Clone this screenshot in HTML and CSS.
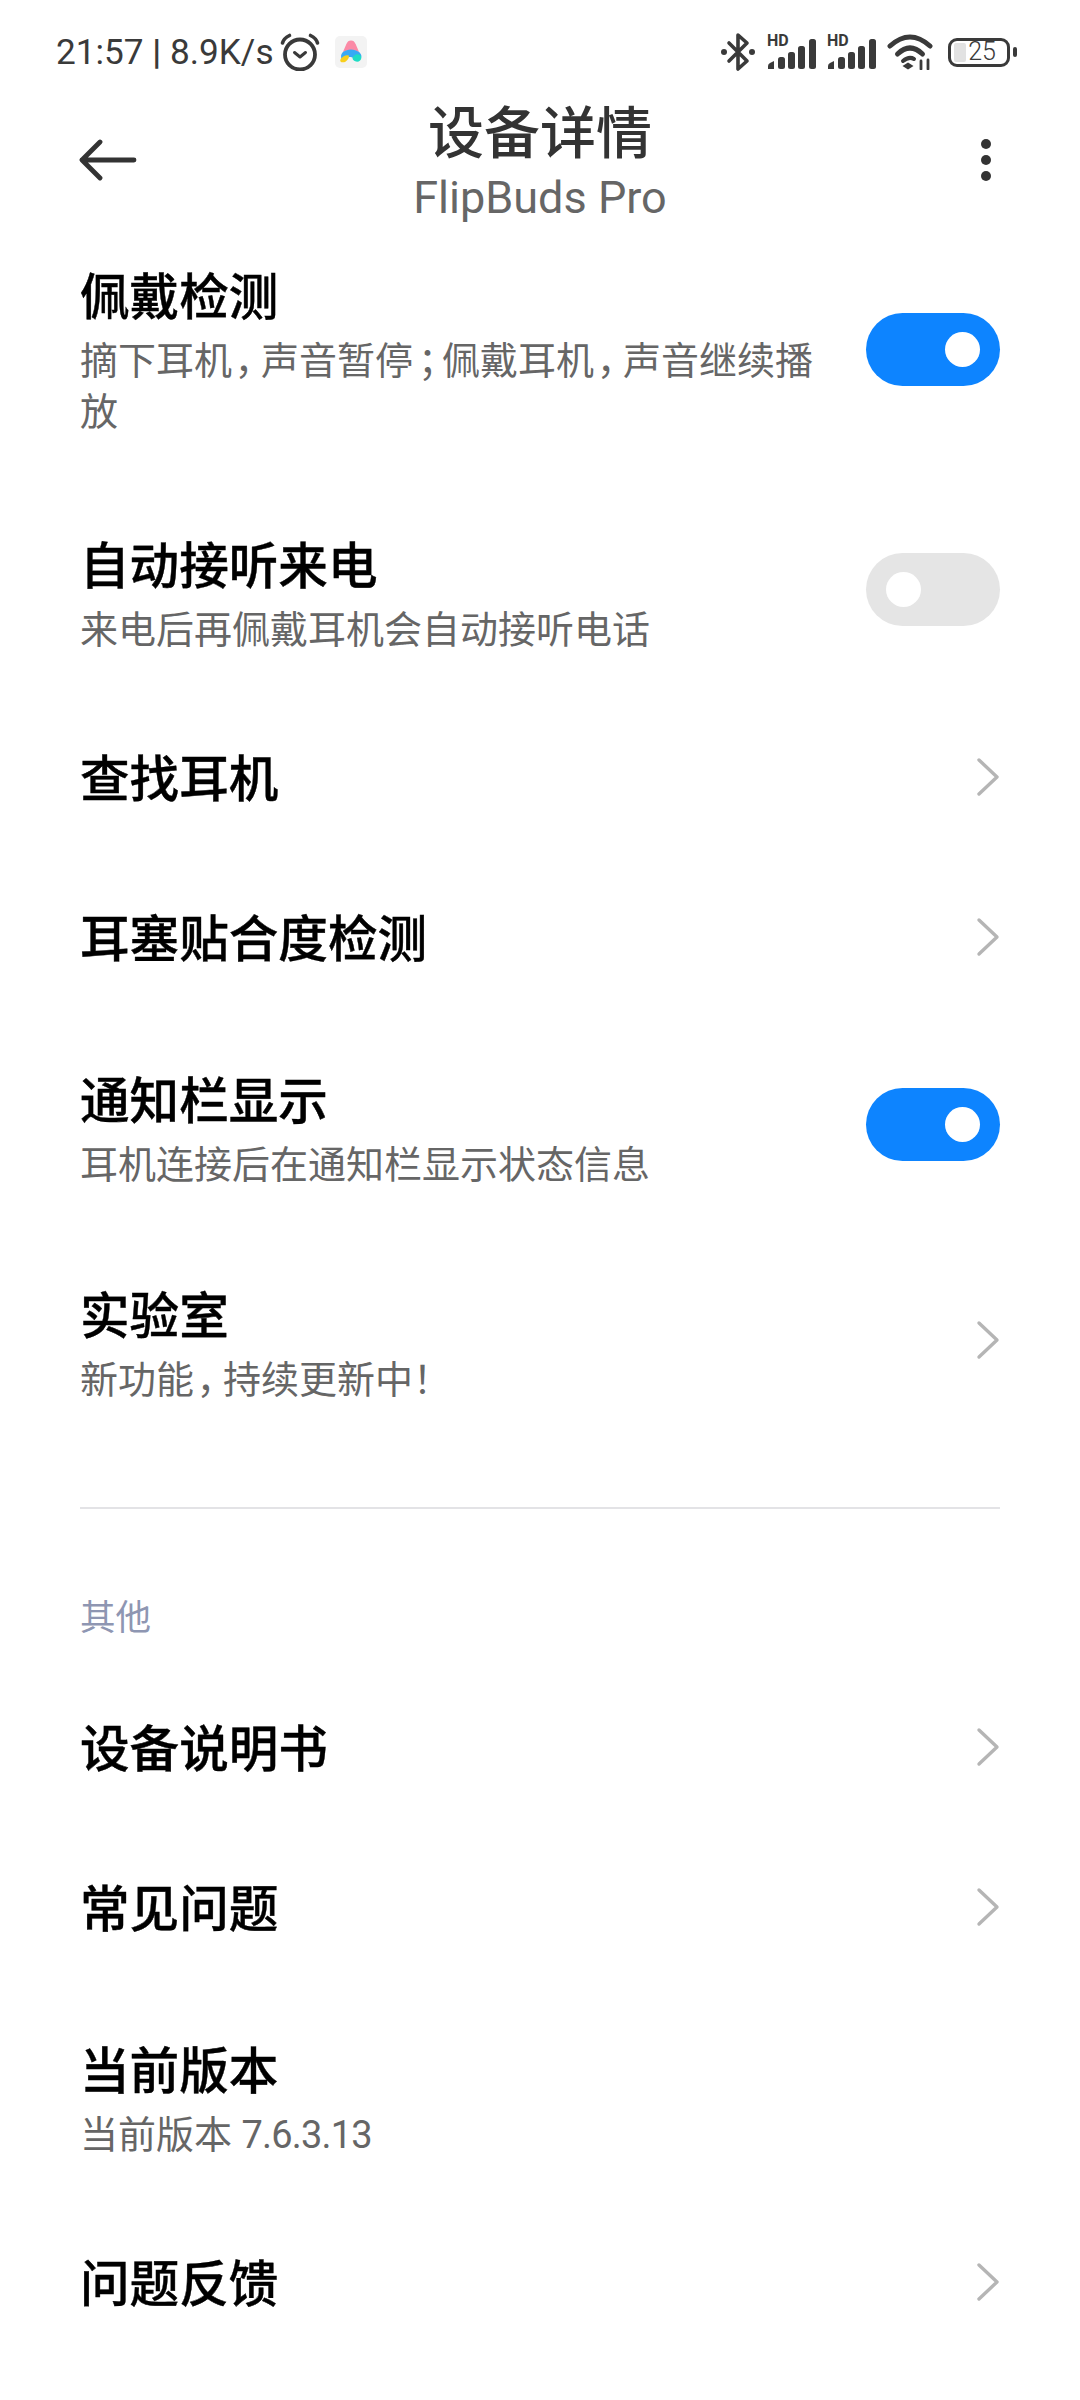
FILE: index.html
```html
<!DOCTYPE html>
<html lang="zh">
<head>
    <meta charset="utf-8">
    <title>设备详情</title>
    <link rel="stylesheet" href="styles.css">
</head>
<body>
    <div class="status-bar">
        <div class="status-left">
            <span class="status-text">21:57 <b class="status-sep">|</b> 8.9K/s</span>
            <svg class="icon-alarm" width="40" height="38" viewBox="0 0 40 38" fill="none" stroke="#3a3a3a">
                <circle cx="20" cy="21.5" r="15" stroke-width="3.8"/>
                <path d="M14.5 19.5l5.5 4.5 5.5-4.5" stroke-width="3" stroke-linecap="round" stroke-linejoin="round"/>
                <path d="M2.5 10c1-4 4-6 7-7.500M37.500 10c-1-4-4-6-7-7.500" stroke-width="3.6" stroke-linecap="round"/>
            </svg>
            <svg class="icon-app" width="32" height="32" viewBox="0 0 32 32">
                <rect width="32" height="32" rx="5" fill="#f3f3f3"/>
                <g transform="translate(-2.4 -2.4) scale(1.15)">
                    <path d="M16 6c2 0 3 1 4 3l3 7c-4-2-10-2-14 0l3-7c1-2 2-3 4-3z" fill="#fb8aa6"/>
                    <path d="M9 16c4-3 10-3 14 0 2 2 3 4 1 6-1 1-3 1-5 0-2-2-5-2-7-1l-4 2c-1-3-1-5 1-7z" fill="#38a9f5"/>
                    <path d="M19 19c2-2 6-1 6 2s-4 5-7 2c-1-1-1-3 1-4z" fill="#1fdcc4"/>
                    <path d="M7 22c1-2 5-4 7-3 1 2-2 6-5 6-2 0-3-1-2-3z" fill="#f8cf1c"/>
                </g>
            </svg>
        </div>
        <div class="status-right">
            <svg width="36" height="40" viewBox="0 0 36 40" fill="none" stroke="#3a3a3a" stroke-width="3.6" stroke-linejoin="round" stroke-linecap="round">
                <path d="M9 11l18 18-9 8V3l9 8L9 29"/>
                <circle cx="4" cy="20" r="3" fill="#3a3a3a" stroke="none"/>
                <circle cx="32" cy="20" r="3" fill="#3a3a3a" stroke="none"/>
            </svg>
            <div class="signal">
                <span class="signal-hd">HD</span>
                <svg class="signal-bars" width="49" height="30" viewBox="0 0 49 30" fill="#3a3a3a">
                    <path d="M1 30v-3q0-2 2-3l4-2v8z"/>
                    <rect x="11" y="18" width="7" height="12" rx="2.5"/>
                    <rect x="21" y="13" width="7" height="17" rx="2.5"/>
                    <rect x="31" y="7" width="7" height="23" rx="2.5"/>
                    <rect x="42" y="0" width="7" height="30" rx="2.5"/>
                </svg>
            </div>
            <div class="signal">
                <span class="signal-hd">HD</span>
                <svg class="signal-bars" width="49" height="30" viewBox="0 0 49 30" fill="#3a3a3a">
                    <path d="M1 30v-3q0-2 2-3l4-2v8z"/>
                    <rect x="11" y="18" width="7" height="12" rx="2.5"/>
                    <rect x="21" y="13" width="7" height="17" rx="2.5"/>
                    <rect x="31" y="7" width="7" height="23" rx="2.5"/>
                    <rect x="42" y="0" width="7" height="30" rx="2.5"/>
                </svg>
            </div>
            <svg width="46" height="36" viewBox="0 0 46 36" fill="none" stroke="#3a3a3a" stroke-width="5" stroke-linecap="round">
                <path d="M3 12Q23-6 43 12"/>
                <path d="M10.500 20Q23 8 35.500 20"/>
                <path d="M16 27q6-5 11-2" stroke-width="4"/>
                <path d="M21 35.500l-5.500-3.500 5.500-3.500 5.500 3.500z" fill="#3a3a3a" stroke="none"/>
                <path d="M34 27v8M41 26v9" stroke-width="2.8"/>
            </svg>
            <div class="battery">
                <div class="battery-body">
                    <div class="battery-level"></div>
                    <span class="battery-num">25</span>
                </div>
                <div class="battery-nub"></div>
            </div>
        </div>
    </div>

    <div class="header">
        <svg class="back-icon" width="58" height="42" viewBox="0 0 58 42" fill="none" stroke="#333" stroke-width="4.8" stroke-linecap="round" stroke-linejoin="round">
            <path d="M55 21H3M21 3L3 21l18 18"/>
        </svg>
        <div class="header-titles">
            <div class="header-title">设备详情</div>
            <div class="header-sub">FlipBuds Pro</div>
        </div>
        <div class="more-icon">
            <span class="dot"></span>
            <span class="dot"></span>
            <span class="dot"></span>
        </div>
    </div>

    <div class="row row-tall">
        <div class="row-text">
            <div class="row-title">佩戴检测</div>
            <div class="row-sub">摘下耳机<span class="punct">，</span>声音暂停<span class="punct">；</span>佩戴耳机<span class="punct">，</span>声音继续播放</div>
        </div>
        <div class="switch on"><span class="knob"></span></div>
    </div>
    <div class="row row-double">
        <div class="row-text">
            <div class="row-title">自动接听来电</div>
            <div class="row-sub">来电后再佩戴耳机会自动接听电话</div>
        </div>
        <div class="switch"><span class="knob"></span></div>
    </div>
    <div class="row">
        <div class="row-text">
            <div class="row-title">查找耳机</div>
        </div>
        <svg class="chevron" width="24" height="40" viewBox="0 0 24 40"><path d="M3 3l18 17L3 37"/></svg>
    </div>
    <div class="row">
        <div class="row-text">
            <div class="row-title">耳塞贴合度检测</div>
        </div>
        <svg class="chevron" width="24" height="40" viewBox="0 0 24 40"><path d="M3 3l18 17L3 37"/></svg>
    </div>
    <div class="row row-double">
        <div class="row-text">
            <div class="row-title">通知栏显示</div>
            <div class="row-sub">耳机连接后在通知栏显示状态信息</div>
        </div>
        <div class="switch on"><span class="knob"></span></div>
    </div>
    <div class="row row-double">
        <div class="row-text">
            <div class="row-title">实验室</div>
            <div class="row-sub">新功能<span class="punct">，</span>持续更新中！</div>
        </div>
        <svg class="chevron" width="24" height="40" viewBox="0 0 24 40"><path d="M3 3l18 17L3 37"/></svg>
    </div>

    <div class="divider"></div>
    <div class="section-label">其他</div>

    <div class="row">
        <div class="row-text">
            <div class="row-title">设备说明书</div>
        </div>
        <svg class="chevron" width="24" height="40" viewBox="0 0 24 40"><path d="M3 3l18 17L3 37"/></svg>
    </div>
    <div class="row">
        <div class="row-text">
            <div class="row-title">常见问题</div>
        </div>
        <svg class="chevron" width="24" height="40" viewBox="0 0 24 40"><path d="M3 3l18 17L3 37"/></svg>
    </div>
    <div class="row row-double">
        <div class="row-text">
            <div class="row-title">当前版本</div>
            <div class="row-sub">当前版本 <span class="version-num">7.6.3.13</span></div>
        </div>
    </div>
    <div class="row">
        <div class="row-text">
            <div class="row-title">问题反馈</div>
        </div>
        <svg class="chevron" width="24" height="40" viewBox="0 0 24 40"><path d="M3 3l18 17L3 37"/></svg>
    </div>
</body>
</html>
```
FILE: styles.css
```css
body {
    margin: 0;
    width: 1080px;
    height: 2400px;
    overflow: hidden;
    background-color: #fff;
    font-family: Roboto, "Noto Sans CJK SC", sans-serif;
    color: #000;
}

.status-bar {
    height: 80px;
    padding: 24px 63px 0 56px;
    box-sizing: border-box;
    display: flex;
    justify-content: space-between;
    align-items: center;
}

.status-left,
.status-right {
    display: flex;
    align-items: center;
}

.status-text {
    font-size: 35.2px;
    color: #3a3a3a;
    white-space: nowrap;
}

.status-sep {
    font-weight: 700;
}

.icon-alarm {
    margin-left: 6px;
}

.icon-app {
    margin-left: 15px;
}

.status-right {
    gap: 11px;
}

.signal {
    position: relative;
    width: 49px;
    height: 40px;
}

.signal-bars {
    position: absolute;
    left: 0;
    bottom: 3px;
}

.signal-hd {
    position: absolute;
    left: 0;
    top: 0;
    font-size: 16px;
    font-weight: 700;
    color: #3a3a3a;
    line-height: 18px;
}

.battery {
    display: flex;
    align-items: center;
    margin-left: 4px;
}

.battery-body {
    position: relative;
    width: 62px;
    height: 29px;
    box-sizing: border-box;
    border: 3.5px solid #3a3a3a;
    border-radius: 9px;
    display: flex;
    align-items: center;
    justify-content: center;
}

.battery-level {
    position: absolute;
    left: 3px;
    top: 2px;
    bottom: 2px;
    width: 12px;
    background-color: #e2e2e2;
    border-radius: 2px;
}

.battery-num {
    position: relative;
    font-size: 25px;
    font-weight: 300;
    line-height: 22px;
    color: #3a3a3a;
    margin-left: 6px;
}

.battery-nub {
    width: 4px;
    height: 10px;
    margin-left: 3px;
    background-color: #3a3a3a;
    border-radius: 2px;
}

.header {
    position: relative;
    height: 136px;
    display: flex;
    justify-content: center;
}

.back-icon {
    position: absolute;
    left: 79px;
    top: 59px;
}

.header-titles {
    text-align: center;
}

.header-title {
    font-size: 56px;
    font-weight: 500;
    line-height: 66px;
    margin-top: 21px;
    color: #333;
}

.header-sub {
    font-size: 45px;
    line-height: 54px;
    margin-top: 4px;
    color: #666;
}

.more-icon {
    position: absolute;
    left: 981px;
    top: 59px;
    display: flex;
    flex-direction: column;
    gap: 6px;
}

.dot {
    width: 10px;
    height: 10px;
    border-radius: 50%;
    background-color: #333;
}

.row {
    min-height: 160px;
    padding: 0 80px;
    box-sizing: border-box;
    display: flex;
    align-items: center;
    justify-content: space-between;
}

.row-double {
    min-height: 215px;
}

.row-tall {
    min-height: 266px;
}

.row-text {
    max-width: 745px;
    padding-top: 6px;
}

.row-tall .row-text {
    padding-top: 0;
}

.row-title {
    font-size: 49.6px;
    font-weight: 500;
    line-height: 75px;
    -webkit-text-stroke: 0.4px #000;
}

.row-sub {
    font-size: 38px;
    line-height: 51px;
    color: #666;
    font-feature-settings: "palt";
}

.punct {
    padding: 0 5px;
}

.version-num {
    letter-spacing: -0.8px;
}

.switch {
    flex: none;
    position: relative;
    width: 134px;
    height: 73px;
    border-radius: 37px;
    background-color: #e5e5e5;
}

.switch.on {
    background-color: #0d84ff;
}

.knob {
    position: absolute;
    left: 20px;
    top: 19px;
    width: 35px;
    height: 35px;
    border-radius: 50%;
    background-color: #fff;
}

.switch.on .knob {
    left: 79px;
}

.chevron {
    flex: none;
    fill: none;
    stroke: #b5b5b5;
    stroke-width: 3.4;
    stroke-linecap: round;
    stroke-linejoin: round;
}

.divider {
    height: 2px;
    margin: 60px 80px 0;
    background-color: #e3e3e6;
}

.section-label {
    font-size: 35.5px;
    line-height: 48px;
    margin: 85px 80px 25px;
    color: #8e96b2;
}
```
